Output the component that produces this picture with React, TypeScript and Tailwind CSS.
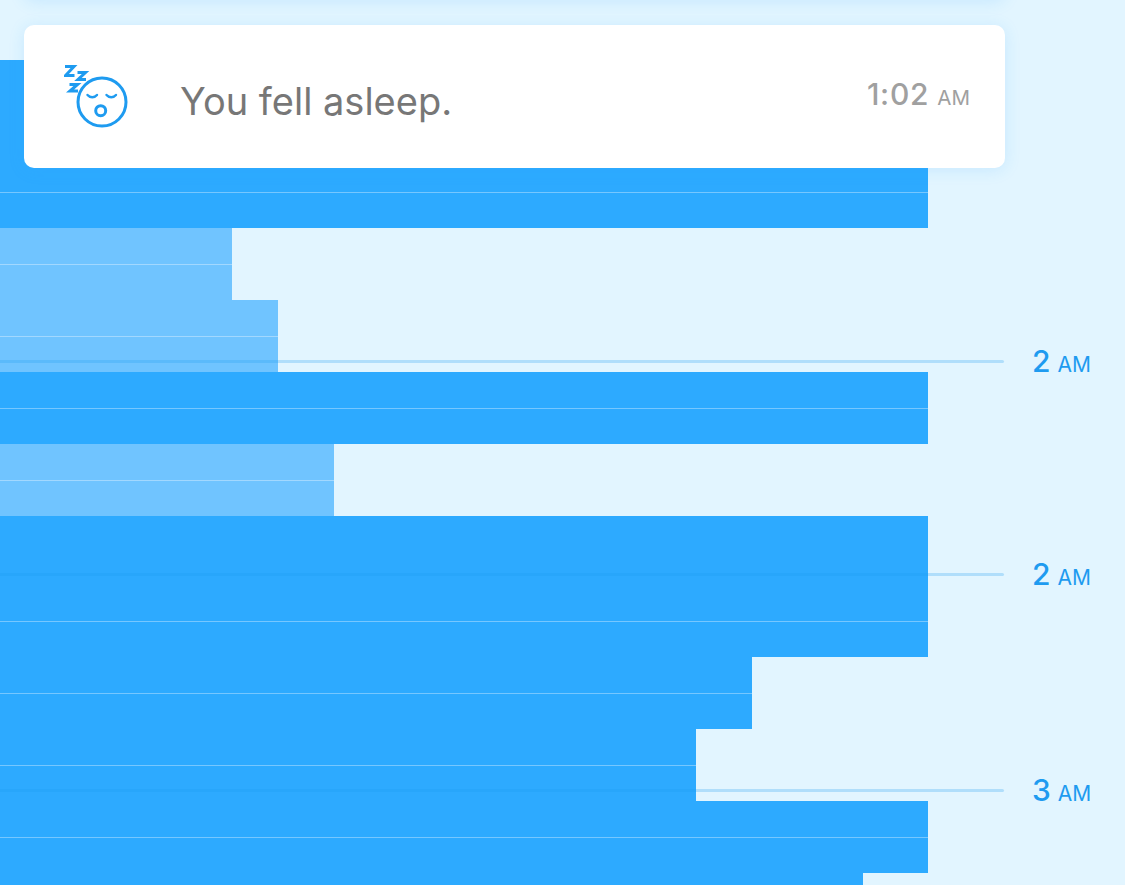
const rows: [number, string, string][] = [
  [132, "100%", "bg-[#2daaff]"],
  [36, "100%", "bg-[#2daaff]"],
  [36, "232px", "bg-[#70c4ff]"],
  [36, "232px", "bg-[#70c4ff]"],
  [36, "278px", "bg-[#70c4ff]"],
  [36, "278px", "bg-[#70c4ff]"],
  [36, "100%", "bg-[#2daaff]"],
  [36, "100%", "bg-[#2daaff]"],
  [36, "334px", "bg-[#70c4ff]"],
  [36, "334px", "bg-[#70c4ff]"],
  [105, "100%", "bg-[#2daaff]"],
  [36, "100%", "bg-[#2daaff]"],
  [36, "752px", "bg-[#2daaff]"],
  [36, "752px", "bg-[#2daaff]"],
  [36, "696px", "bg-[#2daaff]"],
  [36, "696px", "bg-[#2daaff]"],
  [36, "100%", "bg-[#2daaff]"],
  [36, "100%", "bg-[#2daaff]"],
  [36, "863px", "bg-[#2daaff]"],
];

function Hour({ top, n, labelTop }: { top: string; n: string; labelTop: string }) {
  return (
    <>
      <div className={`absolute left-0 w-[1004px] h-[3px] bg-[#1b9df0]/25 rounded-r-full ${top}`} />
      <div className={`absolute left-[1032px] flex items-baseline gap-[7px] text-[#1e9bf0] ${labelTop}`}>
        <span className="text-[30px] leading-none font-medium">{n}</span>
        <span className="text-[21px] leading-none">AM</span>
      </div>
    </>
  );
}

export default function App() {
  return (
    <div
      className="relative w-[1125px] h-[885px] overflow-hidden bg-[#e2f5ff]"
      style={{ fontFamily: '"Inter", "Liberation Sans", sans-serif' }}
    >
      <div className="flex flex-col w-[928px] pt-[60px]">
        {rows.map(([h, w, c], i) => (
          <div
            key={i}
            className={`${c} shrink-0 ${i % 2 === 1 ? "border-t border-white/35" : ""}`}
            style={{ height: h, width: w }}
          />
        ))}
      </div>

      <Hour top="top-[360px]" labelTop="top-[346px]" n="2" />
      <Hour top="top-[573px]" labelTop="top-[559px]" n="2" />
      <Hour top="top-[789px]" labelTop="top-[775px]" n="3" />

      <div className="absolute left-[24px] top-[-144px] w-[981px] h-[144px] rounded-[10px] bg-white shadow-[0_2px_16px_rgba(45,170,255,0.15)]" />

      <div className="absolute left-[24px] top-[25px] w-[981px] h-[143px] rounded-[10px] bg-white shadow-[0_2px_16px_rgba(45,170,255,0.15)] flex items-center">
        <svg className="ml-[40px] shrink-0" width="65" height="65" viewBox="0 0 65 65" fill="none" stroke="#1e9bf0" strokeWidth="3">
          <circle cx="38" cy="38" r="24" />
          <path d="M23.500 31c2.500 3 7 3 9.500 0M42.500 31c2.500 3 7 3 9.500 0" strokeWidth="2.400" strokeLinecap="round" />
          <circle cx="36.700" cy="46.700" r="5" />
          <path d="M1 2.500h9L1.500 11.500h9M13.500 8.500h8L14 15.500h8M5.500 20.500h8L6 27h8" strokeWidth="3" />
        </svg>
        <span className="ml-[51px] mt-[8px] text-[38px] leading-none text-[#777777]">You fell asleep.</span>
        <div className="ml-auto mr-[35px] flex items-baseline gap-[8px] text-[#a0a0a0] -mt-[5px]">
          <span className="text-[30px] leading-none font-medium tracking-[0.75px]">1:02</span>
          <span className="text-[20.5px] leading-none">AM</span>
        </div>
      </div>
    </div>
  );
}
